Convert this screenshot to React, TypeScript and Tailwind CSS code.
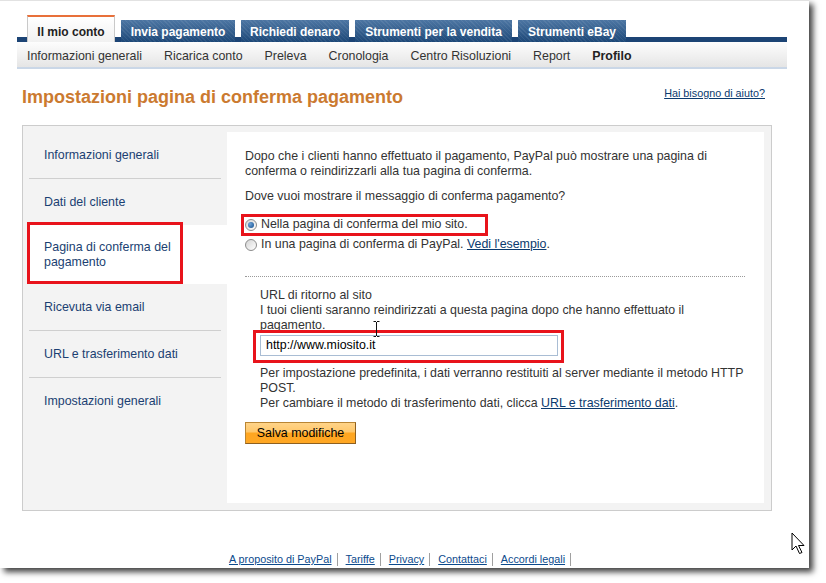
import React from "react";

const tabs = [
  { label: "Invia pagamento", w: "w-[114px]" },
  { label: "Richiedi denaro", w: "w-[108px]" },
  { label: "Strumenti per la vendita", w: "w-[157px]" },
  { label: "Strumenti eBay", w: "w-[108px]" },
];

const subNav = [
  "Informazioni generali",
  "Ricarica conto",
  "Preleva",
  "Cronologia",
  "Centro Risoluzioni",
  "Report",
];

const footerLinks = ["A proposito di PayPal", "Tariffe", "Privacy", "Contattaci", "Accordi legali"];

function Radio({ checked }: { checked?: boolean }) {
  return (
    <span className="w-[12px] h-[12px] rounded-full border border-[#8c8c8c] bg-[linear-gradient(135deg,#d4d4d4,#ffffff)] flex items-center justify-center shrink-0">
      {checked && (
        <span className="w-[6px] h-[6px] rounded-full bg-[radial-gradient(circle_at_35%_35%,#6fa3d8,#0f4c8c)]" />
      )}
    </span>
  );
}

function NavItem({ label }: { label: string }) {
  return (
    <div className="h-[46px] flex items-center pl-[21px] text-[#1b3f72]">{label}</div>
  );
}

function Separator() {
  return <div className="h-px mx-[6px] bg-[#cfcfcf]" />;
}

export default function App() {
  return (
    <div className="w-[826px] h-[583px] bg-white font-['Liberation_Sans',Arial,sans-serif] text-[12.4px] text-[#333]">
      <div className="relative w-[809px] h-[568px] bg-white border-t border-[#e2e2e2] shadow-[4px_4px_6px_rgba(0,0,0,0.75)]">
        {/* top tabs */}
        <div className="ml-[17px] w-[770px] pt-[14px]">
          <div className="h-[27px] flex items-end gap-[6px] pl-[10px] bg-[linear-gradient(to_bottom,transparent_22px,#1c4475_22px)]">
            <div className="w-[88px] h-[27px] border-t-2 border-x border-t-[#e8703a] border-x-[#c9c9c9] bg-[linear-gradient(#ffffff,#f1f1f1)] flex items-center justify-center pt-[4px] font-bold text-[12px] text-[#222]">
              Il mio conto
            </div>
            {tabs.map((t) => (
              <div
                key={t.label}
                className={`${t.w} h-[22px] pt-[1px] bg-[repeating-linear-gradient(45deg,rgba(255,255,255,0.07)_0_1px,transparent_1px_3px),linear-gradient(#4d76a3,#1d4878)] flex items-center justify-center font-bold text-[12px] text-white`}
              >
                {t.label}
              </div>
            ))}
          </div>
          {/* sub nav */}
          <div className="h-[27px] flex items-center gap-[22px] pl-[10px] pt-[3px] bg-[linear-gradient(#fdfdfd,#e5e5e5)] border-b-2 border-[#cad7e7]">
            {subNav.map((s) => (
              <span key={s}>{s}</span>
            ))}
            <span className="font-bold text-[#222]">Profilo</span>
          </div>
        </div>

        {/* title */}
        <div className="ml-[22px] w-[743px] mt-[17px] flex justify-between items-start">
          <h1 className="text-[18px] leading-[22px] font-bold text-[#cb7a30]">
            Impostazioni pagina di conferma pagamento
          </h1>
          <a className="mt-[1px] text-[10.8px] leading-[13px] text-[#0b3a6e] underline">
            Hai bisogno di aiuto?
          </a>
        </div>

        {/* main box */}
        <div className="ml-[22px] mt-[17px] w-[750px] h-[386px] border border-[#cccccc] bg-[#f3f3f3] flex">
          <div className="w-[204px] pt-[6px]">
            <NavItem label="Informazioni generali" />
            <Separator />
            <NavItem label="Dati del cliente" />
            <div className="relative h-[59px] ml-[6px] bg-white flex items-center pl-[15px] leading-[15px] text-[#1b3f72]">
              <span>
                Pagina di conferma del
                <br />
                pagamento
              </span>
              <div className="absolute left-[-2px] top-[-3px] w-[156px] h-[62px] border-[3px] border-[#e8131b]" />
            </div>
            <NavItem label="Ricevuta via email" />
            <Separator />
            <NavItem label="URL e trasferimento dati" />
            <Separator />
            <NavItem label="Impostazioni generali" />
          </div>

          <div className="w-[537px] h-[371px] mt-[6px] bg-white pl-[18px] pt-[17px] leading-[15px]">
            <div className="w-[500px]">
              <p>
                Dopo che i clienti hanno effettuato il pagamento, PayPal può mostrare una pagina di
                <br />
                conferma o reindirizzarli alla tua pagina di conferma.
              </p>
              <p className="mt-[10px]">Dove vuoi mostrare il messaggio di conferma pagamento?</p>
              <div className="relative mt-[11px] h-[19px] flex items-center gap-[4px]">
                <Radio checked />
                <span>Nella pagina di conferma del mio sito.</span>
                <div className="absolute left-[-4px] top-[-1px] w-[247px] h-[22px] border-[3px] border-[#e8131b]" />
              </div>
              <div className="mt-[1px] h-[19px] flex items-center gap-[4px]">
                <Radio />
                <span>
                  In una pagina di conferma di PayPal.{" "}
                  <a className="text-[#0b3a6e] underline">Vedi l'esempio</a>.
                </span>
              </div>
              <div className="mt-[22px] border-t border-dotted border-[#9a9a9a]" />
              <div className="pl-[15px] mt-[11px]">
                <p>
                  URL di ritorno al sito
                  <br />
                  I tuoi clienti saranno reindirizzati a questa pagina dopo che hanno effettuato il
                  <br />
                  pagamento.
                </p>
                <div className="relative mt-[2px] w-[298px]">
                  <div className="h-[21px] border border-[#a9bdd4] bg-white flex items-center pl-[5px] text-black">
                    http://www.miosito.it
                  </div>
                  <div className="absolute left-[-7px] top-[-5px] w-[311px] h-[33px] border-[3px] border-[#e8131b]" />
                </div>
                <p className="mt-[10px]">
                  Per impostazione predefinita, i dati verranno restituiti al server mediante il metodo HTTP
                  <br />
                  POST.
                  <br />
                  Per cambiare il metodo di trasferimento dati, clicca{" "}
                  <a className="text-[#0b3a6e] underline">URL e trasferimento dati</a>.
                </p>
              </div>
              <button className="mt-[11px] w-[111px] h-[22px] border border-[#b98533] border-b-[#8e6020] border-r-[#8e6020] bg-[linear-gradient(#ffd489_0,#ffc76a_45%,#ffa620_50%,#ffa724_100%)] text-black text-[12.4px]">
                Salva modifiche
              </button>
            </div>
          </div>
        </div>

        {/* footer */}
        <div className="ml-[22px] w-[750px] mt-[42px] pl-[14px] flex justify-center items-center text-[10.8px] leading-[13px]">
          {footerLinks.map((l) => (
            <React.Fragment key={l}>
              <a className="text-[#0b4a8c] underline mr-[5px]">{l}</a>
              <span className="w-px h-[13px] bg-[#a0a0a0] mr-[8px]" />
            </React.Fragment>
          ))}
        </div>

        {/* i-beam cursor */}
        <svg className="absolute left-[373px] top-[320px]" width="7" height="16" viewBox="0 0 7 16">
          <path d="M0.5 0.5h2.5M4 0.5h2.5M3.5 1v14M0.5 15.5h2.5M4 15.5h2.5" stroke="#111" strokeWidth="1" fill="none" />
        </svg>

        {/* arrow cursor */}
        <svg className="absolute left-[791px] top-[531px]" width="16" height="25" viewBox="0 0 16 25">
          <path d="M1 1 L1 18 L5 14 L8.5 21.5 L11 20.5 L7.5 13.5 L13 13.5 Z" fill="#fff" stroke="#000" strokeWidth="1" strokeLinejoin="miter" />
        </svg>
      </div>
    </div>
  );
}
